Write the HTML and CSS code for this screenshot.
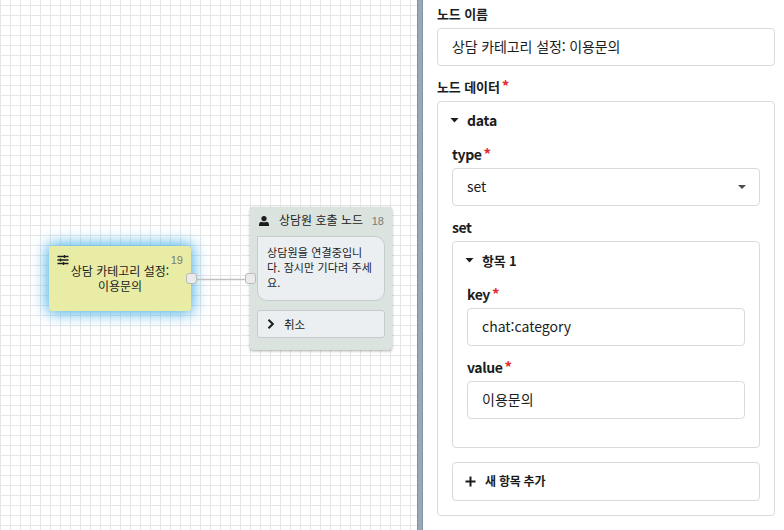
FILE: index.html
```
<!DOCTYPE html>
<html lang="ko">
<head>
<meta charset="utf-8">
<title>노드 편집</title>
<link rel="stylesheet" href="styles.css">
</head>
<body>
<div class="app">
  <main class="canvas">
    <svg class="link" width="60" height="4" viewBox="0 0 60 4"><path d="M0 1.5H60" fill="none" stroke="#c0c0c0" stroke-width="1.6"/></svg>
    <div class="node setter">
      <svg class="sliders" viewBox="0 0 12 10" width="12" height="10"><path d="M.5 1.5h11M.5 5h11M.5 8.500h11M7.500 0v3M3.500 3.500v3M6.500 7v3" fill="none" stroke="#1b1c1d" stroke-width="1.3"/></svg>
      <span class="num">19</span>
      <div class="title"><span>상담 카테고리 설정:</span><span>이용문의</span></div>
      <i class="port out"></i>
    </div>
    <div class="node agent">
      <header class="head">
        <svg viewBox="0 0 10 10" width="10" height="10"><circle cx="5" cy="2.600" r="2.600" fill="#1b1c1d"/><path d="M0 10V8.400Q0 5.900 2.500 5.700Q5 6.800 7.500 5.700Q10 5.900 10 8.400V10Z" fill="#1b1c1d"/></svg>
        <span class="name">상담원 호출 노드</span>
        <span class="num">18</span>
      </header>
      <div class="bubble">상담원을 연결중입니<br>다. 잠시만 기다려 주세<br>요.</div>
      <div class="choice">
        <svg viewBox="0 0 8 10" width="8" height="10"><path d="M1.500 .8L5.800 5L1.500 9.200" fill="none" stroke="#1b1c1d" stroke-width="2"/></svg>
        <span>취소</span>
      </div>
      <i class="port in"></i>
    </div>
  </main>
  <div class="divider"></div>
  <aside class="panel">
    <label class="label">노드 이름</label>
    <div class="input">상담 카테고리 설정: 이용문의</div>
    <label class="label next">노드 데이터<sup>*</sup></label>
    <section class="group outer">
      <div class="toggle"><i class="caret"></i><span>data</span></div>
      <label class="label latin">type<sup>*</sup></label>
      <div class="input select"><span>set</span><i class="caret small"></i></div>
      <label class="label latin next">set</label>
      <section class="group inner">
        <div class="toggle"><i class="caret"></i><span>항목 1</span></div>
        <label class="label latin">key<sup>*</sup></label>
        <div class="input plain">chat:category</div>
        <label class="label latin next">value<sup>*</sup></label>
        <div class="input plain">이용문의</div>
      </section>
      <div class="add">
        <svg viewBox="0 0 11 11" width="11" height="11"><path d="M5.500 .5v10M.5 5.500h10" stroke="#1b1c1d" stroke-width="2"/></svg>
        <span>새 항목 추가</span>
      </div>
    </section>
  </aside>
</div>
</body>
</html>
```

FILE: styles.css
```
* { box-sizing: border-box; }
body {
  margin: 0;
  overflow: hidden;
  background: #fff;
  color: #1b1c1d;
  font: 14px/20px "Noto Sans CJK KR", sans-serif;
}
.app { display: flex; width: 784px; height: 530px; }

.canvas {
  position: relative;
  width: 417px;
  background-color: #fff;
  background-image:
    linear-gradient(90deg, #e6e6e6 1px, transparent 1px),
    linear-gradient(#e6e6e6 1px, transparent 1px);
  background-size: 10px 10px;
  background-position: 0 5px;
}
.divider {
  width: 6px;
  background: #98a8b8;
  border-left: 1px solid #8292a2;
  border-right: 1px solid #8292a2;
}
.link { position: absolute; left: 192px; top: 278px; z-index: 1; }
.node { position: absolute; border-radius: 3px; }
.num {
  color: #777d73;
  font: 11px/14px "Liberation Sans", sans-serif;
}
.setter {
  left: 49px;
  top: 246px;
  width: 142px;
  height: 65px;
  padding-top: 17px;
  background: #e9eca5;
  box-shadow: 0 0 15px 2px #45b0e6;
}
.setter .num { position: absolute; right: 8px; top: 7px; }
.sliders { position: absolute; left: 8px; top: 9px; }
.title { text-align: center; font-size: 12px; line-height: 15px; }
.title span { display: block; }
.port {
  position: absolute;
  z-index: 2;
  width: 11px;
  height: 11px;
  border: 1px solid #bbb;
  border-radius: 3px;
  background: #ebebeb;
}
.port.out { right: -6px; top: 27px; }
.port.in { left: -5px; top: 66px; }
.agent {
  left: 250px;
  top: 207px;
  width: 142px;
  height: 143px;
  padding: 0 7px;
  background: #dbe3df;
  box-shadow: 0 1px 3px #0005;
}
.head { display: flex; align-items: center; height: 29px; padding: 0 1px 0 2px; }
.head svg { margin-top: -1px; }
.head .name { margin-left: 10px; font-size: 12px; line-height: 16px; margin-top: -3px; }
.head .num { margin: -2px 0 0 auto; }
.bubble {
  height: 65px;
  padding: 8px 9px;
  border: 1px solid #c7cbce;
  border-radius: 0 10px 10px 10px;
  background: #ebeff2;
  font-size: 11px;
  line-height: 15px;
  letter-spacing: .12px;
  white-space: nowrap;
}
.choice {
  display: flex;
  align-items: center;
  gap: 9px;
  height: 28px;
  margin-top: 9px;
  padding: 0 0 1px 9px;
  border: 1px solid #c7cbce;
  border-radius: 3px;
  background: #ebeff2;
  font-size: 11.5px;
}

.panel { width: 361px; padding: 5px 9px 0 14px; }
.label {
  display: block;
  height: 19px;
  margin-bottom: 4px;
  font-size: 13px;
  font-weight: 700;
  line-height: 18px;
  letter-spacing: -.1px;
}
.label.latin { font-size: 14px; line-height: 19px; letter-spacing: -.4px; }
.label.next { margin-top: 12px; }
.label sup {
  margin-left: 2px;
  color: #e42b31;
  font-size: 15px;
  line-height: 0;
  vertical-align: 0;
}
.input {
  height: 38px;
  padding: 0 14px;
  border: 1px solid #d9dadb;
  border-radius: 4px;
  line-height: 34px;
  letter-spacing: -.12px;
}
.input.plain { letter-spacing: 0; }
.select { display: flex; align-items: center; justify-content: space-between; }
.select span { margin-top: -2px; }
.caret {
  display: inline-block;
  width: 9px;
  height: 5px;
  background: #1b1c1d;
  clip-path: polygon(0 0, 100% 0, 50% 100%);
}
.select .caret { width: 8px; height: 4px; margin-right: -1px; background: #4c4c4d; }
.group { border: 1px solid #d9dadb; border-radius: 4px; padding: 0 14px; }
.outer { height: 415px; }
.inner { height: 207px; }
.toggle {
  display: flex;
  align-items: center;
  gap: 8px;
  height: 38px;
  margin: 0 0 5px -2px;
  font-weight: 700;
  letter-spacing: -.2px;
}
.toggle span { margin-top: -2px; }
.inner .toggle { font-size: 13px; }
.inner .toggle span { margin-top: -1px; }
.toggle .caret { margin-top: -2px; }
.add {
  display: flex;
  align-items: center;
  gap: 9px;
  height: 39px;
  margin-top: 14px;
  padding: 0 0 1px 12px;
  border: 1px solid #d9dadb;
  border-radius: 4px;
  font-size: 12px;
  font-weight: 700;
  letter-spacing: -.25px;
}
```
